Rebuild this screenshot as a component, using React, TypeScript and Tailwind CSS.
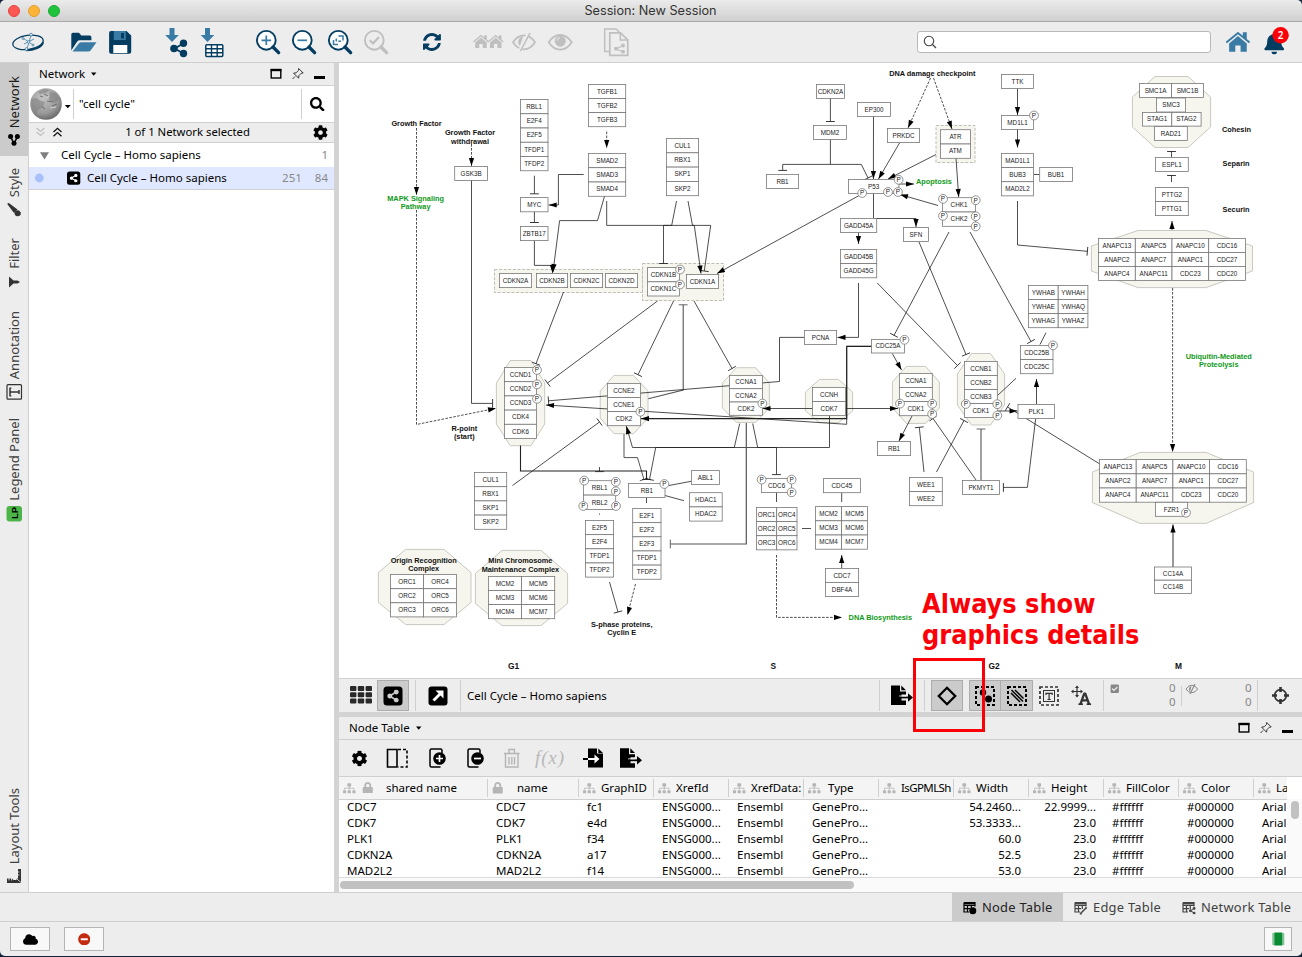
import React from "react";
import {
  FaShareAlt, FaHome, FaBell, FaCog, FaCloud, FaPaintBrush, FaSearch,
  FaSyncAlt, FaMinusCircle, FaSitemap, FaLock, FaCheckSquare, FaFont,
} from "react-icons/fa";

const NAVY = "#053d61";
const BLUE = "#3a7ba5";
const OFF = "#bfbfbf";

type ArtProps = { x: number; y: number; w: number; h: number; children?: React.ReactNode };
const Art = ({ x, y, w, h, children }: ArtProps) => (
  <svg className="block shrink-0" width={w} height={h} viewBox={`${x} ${y} ${w} ${h}`} fill="none">
    {children}
  </svg>
);

/* ---------- network diagram ---------- */

type Pt = [number, number];
type EdgeSpec = { p: Pt[]; end?: "a" | "t"; start?: "a"; dash?: boolean; c?: string; sw?: number };

const head = (from: Pt, to: Pt) => {
  const dx = to[0] - from[0], dy = to[1] - from[1];
  const l = Math.hypot(dx, dy) || 1;
  const ux = dx / l, uy = dy / l;
  const bx = to[0] - ux * 8, by = to[1] - uy * 8;
  return `${to[0]},${to[1]} ${bx - uy * 2.6},${by + ux * 2.6} ${bx + uy * 2.6},${by - ux * 2.6}`;
};
const bar = (from: Pt, to: Pt) => {
  const dx = to[0] - from[0], dy = to[1] - from[1];
  const l = Math.hypot(dx, dy) || 1;
  const ux = dx / l, uy = dy / l;
  return `M${to[0] - uy * 4.4} ${to[1] + ux * 4.4}L${to[0] + uy * 4.4} ${to[1] - ux * 4.4}`;
};

const Edge = ({ p, end, start, dash, c = "#222", sw = 0.8 }: EdgeSpec) => {
  const a = p[p.length - 2], b = p[p.length - 1];
  return (
    <g>
      <polyline points={p.map((q) => q.join(",")).join(" ")} fill="none" stroke={c} strokeWidth={sw} strokeDasharray={dash ? "2.6 1.4" : undefined} />
      {end === "a" && <polygon points={head(a, b)} fill="#000" />}
      {end === "t" && <path d={bar(a, b)} stroke={c} strokeWidth={0.9} />}
      {start === "a" && <polygon points={head(p[1], p[0])} fill="#000" />}
    </g>
  );
};

const G = "#555";
const edges: EdgeSpec[] = [
  { p: [[416.5, 128], [416.5, 195]], end: "a", dash: true },
  { p: [[416.5, 210], [416.5, 424.5], [496, 408.3]], end: "a", dash: true },
  { p: [[471.5, 144], [471.5, 166]], end: "a", dash: true },
  { p: [[471.5, 180], [471.5, 403.4], [492.6, 403.4]], end: "t" },
  { p: [[534.4, 175.7], [534.4, 193.8]], end: "t" },
  { p: [[534.4, 212], [534.4, 222.5]], end: "t" },
  { p: [[534.4, 240.7], [534.4, 265.4], [552.5, 265.4], [552.5, 273]], end: "a" },
  { p: [[583.7, 174.5], [558.4, 174.5], [558.4, 205], [548.7, 205]], end: "a" },
  { p: [[606.7, 131.5], [606.7, 148]], end: "a", dash: true },
  { p: [[604.6, 196], [597.5, 220.6], [559.6, 220.6], [553, 272]], end: "a" },
  { p: [[606.7, 201], [606.7, 225.4], [710.7, 225.4], [704.3, 271]], end: "t" },
  { p: [[676.5, 201], [671.7, 225.4], [663.5, 225.4], [663.5, 263.5]], end: "t" },
  { p: [[688, 201], [692.5, 225.4], [694.3, 225.4], [701, 273.5]], end: "a" },
  { p: [[860, 195], [717, 273.5]], end: "a" },
  { p: [[563.5, 292], [536, 363.7]], end: "t" },
  { p: [[657.5, 301], [547.5, 383]], end: "t" },
  { p: [[673.5, 301], [638, 374.7]], end: "t" },
  { p: [[694, 301], [732, 368.5]], end: "t" },
  { p: [[648.3, 398.7], [683.2, 390], [683.2, 304.8]], end: "t", c: G, sw: 1.1 },
  { p: [[804, 337.4], [779.5, 337.4], [779.5, 381.5], [548.5, 400.8]], end: "t" },
  { p: [[871.7, 346.4], [846.7, 346.4], [846.7, 424.3], [546, 405]], end: "a" },
  { p: [[871.7, 346.4], [846.7, 346.4], [846.7, 418.6], [641, 418.6]], end: "a", sw: 1.1 },
  { p: [[762.5, 408.5], [898, 408.5]], end: "a", start: "a" },
  { p: [[829.5, 415.5], [829.5, 447.5], [632.5, 447.5], [626.3, 426]], end: "a" },
  { p: [[624, 434], [624, 457.6], [637.5, 457.6], [644, 479.5]], end: "t", c: G, sw: 1 },
  { p: [[739.7, 423.5], [734.3, 447.5], [655.7, 447.5], [649.5, 479.5]], end: "t" },
  { p: [[746.3, 423], [746.3, 544], [670.3, 544]], end: "t", c: G, sw: 1.2 },
  { p: [[752.7, 423.5], [757.7, 447.5], [776.5, 447.5], [776.5, 474.6]], end: "t" },
  { p: [[520.5, 445.5], [520.5, 471], [646.5, 471], [646.5, 479.5]], end: "t", sw: 1.1 },
  { p: [[599.5, 467], [599.5, 471.6]], end: "t" },
  { p: [[512.5, 485.5], [599.5, 422]], end: "t" },
  { p: [[669, 485.5], [691, 481.3]] },
  { p: [[665, 495.5], [684, 500.7]] },
  { p: [[646.5, 497], [646.5, 503]] },
  { p: [[599.5, 513.5], [599.5, 514.7]] },
  { p: [[609.5, 582], [618, 612]], end: "t" },
  { p: [[635.5, 584], [627.5, 615]], end: "a", dash: true },
  { p: [[776.5, 492.7], [776.5, 502]] },
  { p: [[776.5, 555], [776.5, 617.4], [842, 617.4]], end: "a", dash: true },
  { p: [[802, 528.5], [811, 528.5]] },
  { p: [[841.7, 493], [841.7, 502]] },
  { p: [[841.7, 568], [841.7, 555]], end: "a" },
  { p: [[858.5, 232], [858.5, 244]], end: "a" },
  { p: [[858.5, 283], [858.5, 337.4], [837.5, 337.4]], end: "a" },
  { p: [[877.3, 283], [957.5, 365.5]], end: "t" },
  { p: [[919, 242], [966, 354.5]], end: "t" },
  { p: [[949, 232], [894, 335.3]], end: "t" },
  { p: [[970, 232], [1031, 341.5]], end: "t" },
  { p: [[892.3, 353.5], [901.5, 370]], end: "a" },
  { p: [[912, 416], [899, 441]], end: "a" },
  { p: [[924, 472], [919.3, 427.3]], end: "t" },
  { p: [[936.5, 472], [964, 420.5]], end: "t" },
  { p: [[976, 480], [933, 418.5]], end: "t" },
  { p: [[981, 480], [981, 429]], end: "t", c: G, sw: 1.1 },
  { p: [[1036.5, 404], [1036.5, 379]], end: "a" },
  { p: [[1035.7, 418.5], [1027.4, 487.4], [1003.4, 487.4]], end: "t" },
  { p: [[1040, 344.5], [1046, 332.7]] },
  { p: [[1016, 378.3], [997.5, 395.5]] },
  { p: [[998, 411], [1017.5, 411]], end: "a" },
  { p: [[1116, 474], [1007.5, 407]], end: "t" },
  { p: [[1173, 567], [1173, 524.5]], end: "a", c: G, sw: 1.2 },
  { p: [[1172.6, 288], [1172.6, 452]], end: "a", dash: true },
  { p: [[1172, 230], [1172, 221]], end: "a" },
  { p: [[930.5, 78], [908, 128]], end: "a", dash: true },
  { p: [[933.5, 78], [952, 129]], end: "a", dash: true },
  { p: [[830.4, 98], [830.4, 121.5]], end: "t" },
  { p: [[830.4, 139], [830.4, 164.4], [782.7, 164.4], [782.7, 170.4]], end: "t" },
  { p: [[830.4, 164.4], [861.3, 164.4], [868, 178]], end: "t" },
  { p: [[873.5, 116.5], [873.4, 179]], end: "a" },
  { p: [[899.5, 143], [878.5, 179]], end: "a" },
  { p: [[936, 154.5], [888, 179]], end: "a" },
  { p: [[956, 158], [958.7, 197]], end: "a" },
  { p: [[899, 184], [914, 184]], end: "a" },
  { p: [[938, 205.5], [900, 194.5]], end: "a" },
  { p: [[873.5, 194], [873.5, 218.5], [916, 218.5], [916, 227]], end: "a" },
  { p: [[1017.5, 88], [1017.5, 115]], end: "a" },
  { p: [[1017.5, 129], [1017.5, 147.5]], end: "a" },
  { p: [[1034, 174.5], [1039.7, 174.5]] },
  { p: [[1017.5, 201], [1017.5, 245], [1087.4, 251.3]], end: "t" },
  { p: [[1171.5, 157], [1171.5, 151.5]], end: "t" },
  { p: [[1171.5, 182], [1171.5, 175.5]], end: "t" },
];

/* left, top, right, bottom, flat-left, flat-right, side-top, side-bottom */
const octagons: number[][] = [
  [496.4, 360.5, 544.7, 445.7, 510.3, 531, 383, 424],
  [600.2, 375.4, 648, 433.7, 614, 633.5, 391, 418],
  [722.4, 367.7, 769.4, 422.4, 736.5, 755.5, 383, 408],
  [892.4, 366.4, 939.4, 423.4, 906.5, 925.5, 382, 408],
  [805.4, 379.4, 852.6, 422.6, 819.5, 838.5, 392, 411],
  [957.4, 353.5, 1004.6, 425, 971.5, 990.5, 374, 405],
  [378.4, 549.4, 471, 624.6, 405.7, 444, 572.5, 602.5],
  [475.4, 550.4, 567.6, 625.6, 502, 541, 573.5, 603.5],
  [1132.4, 76.5, 1210.6, 147.5, 1155, 1188, 97, 127],
  [1091.4, 230.5, 1252.5, 287.6, 1138, 1206, 246, 271],
  [1092.4, 452.4, 1253.6, 523.4, 1140, 1206, 472, 502.5],
];

/* x, y, cell width, cell height, columns, labels */
type Stack = [number, number, number, number, number, string];
const stacks: Stack[] = [
  [588.4, 84.4, 37.3, 14.1, 1, "TGFB1 TGFB2 TGFB3"],
  [520.4, 99.5, 27.6, 14.25, 1, "RBL1 E2F4 E2F5 TFDP1 TFDP2"],
  [588.4, 153.4, 37.3, 14.3, 1, "SMAD2 SMAD3 SMAD4"],
  [520.4, 197.6, 27.6, 14.2, 1, "MYC"],
  [520.4, 226.5, 27.6, 14.1, 1, "ZBTB17"],
  [666.4, 138.5, 32.2, 14.3, 1, "CUL1 RBX1 SKP1 SKP2"],
  [454.7, 166.4, 32.8, 14, 1, "GSK3B"],
  [499.4, 273.5, 32.2, 14.1, 1, "CDKN2A"],
  [536.4, 273.5, 31.2, 14.1, 1, "CDKN2B"],
  [570.4, 273.5, 32.2, 14.1, 1, "CDKN2C"],
  [605.4, 273.5, 32.2, 14.1, 1, "CDKN2D"],
  [647.4, 267.6, 32, 14.2, 1, "CDKN1B CDKN1C"],
  [686.4, 274.5, 32.2, 14, 1, "CDKN1A"],
  [504.4, 367.5, 32.2, 14.2, 1, "CCND1 CCND2 CCND3 CDK4 CDK6"],
  [607.5, 383.4, 32.9, 14.1, 1, "CCNE2 CCNE1 CDK2"],
  [729.5, 375.4, 33, 13.3, 1, "CCNA1 CCNA2 CDK2"],
  [474.5, 472.5, 32.2, 14.2, 1, "CUL1 RBX1 SKP1 SKP2"],
  [583.4, 480.7, 32.3, 14.4, 1, "RBL1 RBL2"],
  [628.6, 483.5, 36.4, 14, 1, "RB1"],
  [691.4, 470.6, 28, 13.8, 1, "ABL1"],
  [689.4, 492.7, 32.8, 14.2, 1, "HDAC1 HDAC2"],
  [632.7, 508.5, 28.3, 14.15, 1, "E2F1 E2F2 E2F3 TFDP1 TFDP2"],
  [585.4, 520.5, 28.2, 14.15, 1, "E2F5 E2F4 TFDP1 TFDP2"],
  [390.5, 574.6, 33, 14.1, 2, "ORC1 ORC4 ORC2 ORC5 ORC3 ORC6"],
  [488.5, 576.4, 33.1, 14.1, 2, "MCM2 MCM5 MCM3 MCM6 MCM4 MCM7"],
  [761.6, 478.4, 30, 14, 1, "CDC6"],
  [756.4, 507.4, 20.3, 14.15, 2, "ORC1 ORC4 ORC2 ORC5 ORC3 ORC6"],
  [823.4, 478.6, 37, 14.1, 1, "CDC45"],
  [815.6, 506.6, 26, 14.2, 2, "MCM2 MCM5 MCM3 MCM6 MCM4 MCM7"],
  [825.4, 568.4, 33.2, 14, 1, "CDC7 DBF4A"],
  [840.5, 218.4, 36.2, 14.1, 1, "GADD45A"],
  [840.5, 249.4, 36.2, 14.2, 1, "GADD45B GADD45G"],
  [804.4, 330.4, 32.2, 14.1, 1, "PCNA"],
  [903.4, 227.4, 25, 14.1, 1, "SFN"],
  [871.6, 339.4, 32.8, 13.6, 1, "CDC25A"],
  [899.4, 373.4, 32.9, 14.1, 1, "CCNA1 CCNA2 CDK1"],
  [812.5, 387.4, 33, 14.1, 1, "CCNH CDK7"],
  [877.5, 441.5, 33, 14.1, 1, "RB1"],
  [909.5, 477.5, 32.8, 14.1, 1, "WEE1 WEE2"],
  [962.5, 480.4, 37, 14, 1, "PKMYT1"],
  [1018, 404.4, 36.6, 14, 1, "PLK1"],
  [1020.4, 345.5, 32.6, 14.1, 1, "CDC25B CDC25C"],
  [1028.5, 285.4, 29.7, 14.1, 2, "YWHAB YWHAH YWHAE YWHAQ YWHAG YWHAZ"],
  [964.4, 361.4, 32.9, 14.05, 1, "CCNB1 CCNB2 CCNB3 CDK1"],
  [1099.5, 459.6, 36.7, 14.2, 4, "ANAPC13 ANAPC5 ANAPC10 CDC16 ANAPC2 ANAPC7 ANAPC1 CDC27 ANAPC4 ANAPC11 CDC23 CDC20"],
  [1155.5, 502.3, 32, 14, 1, "FZR1"],
  [1154.4, 567, 37.2, 13.2, 1, "CC14A CC14B"],
  [1098.6, 238.4, 36.7, 14, 4, "ANAPC13 ANAPC5 ANAPC10 CDC16 ANAPC2 ANAPC7 ANAPC1 CDC27 ANAPC4 ANAPC11 CDC23 CDC20"],
  [816.4, 84.4, 28, 14, 1, "CDKN2A"],
  [813.6, 125.4, 33, 14, 1, "MDM2"],
  [766.4, 174.4, 32.2, 14, 1, "RB1"],
  [857.6, 102.5, 32.8, 14, 1, "EP300"],
  [887.4, 128.5, 32.2, 14, 1, "PRKDC"],
  [940.5, 129.7, 29.9, 14.3, 1, "ATR ATM"],
  [848.5, 179.5, 50.4, 14, 1, "P53"],
  [942.6, 197.7, 32.8, 14.3, 1, "CHK1 CHK2"],
  [1001.4, 74.5, 32.2, 14, 1, "TTK"],
  [1001.4, 115.4, 32.2, 14, 1, "MD1L1"],
  [1001.4, 153.4, 32.2, 14.15, 1, "MAD1L1 BUB3 MAD2L2"],
  [1039.7, 167.4, 32.8, 14.1, 1, "BUB1"],
  [1139.5, 83.5, 32, 13.9, 2, "SMC1A SMC1B"],
  [1156.5, 98, 29, 14, 1, "SMC3"],
  [1142.5, 112.4, 29.3, 13.7, 2, "STAG1 STAG2"],
  [1154.5, 126.4, 32.8, 14, 1, "RAD21"],
  [1155.5, 157.4, 32.8, 14, 1, "ESPL1"],
  [1155.5, 187.4, 32.8, 14.1, 1, "PTTG2 PTTG1"],
];

const phospho: Pt[] = [
  [680, 269.5], [680, 284.5], [537, 370], [537, 384.4], [537, 398.8], [640.4, 411.7], [762.4, 403.5],
  [584.2, 480.6], [615.8, 481.8], [615.8, 491.3], [583.3, 506], [616, 506], [664.4, 484],
  [761.6, 479.6], [791.6, 479.6], [791.6, 492.3], [904.5, 339.8], [900, 403.6], [932.2, 403.8], [932.2, 414],
  [1053, 345.4], [965.8, 404], [997.3, 404.2], [997.3, 415.5], [1186, 512.7],
  [898.6, 179.8], [888, 192], [898, 192], [862.2, 193], [943, 198.8], [975.7, 200.2], [943, 215.8], [975.7, 216.3], [975.7, 226.4],
  [1034, 115.5],
];

/* text, x, baseline, anchor, colour, size */
type Lab = [string, number, number, ("middle" | "start")?, string?, number?];
const GREEN = "#0f9a20";
const labels: Lab[] = [
  ["Growth Factor", 416.5, 126], ["Growth Factor", 470, 135], ["withdrawal", 470, 143.6],
  ["MAPK Signaling", 415.6, 200.6, "middle", GREEN], ["Pathway", 415.6, 209, "middle", GREEN],
  ["R-point", 464.3, 431], ["(start)", 464.3, 439.4],
  ["Origin Recognition", 423.7, 562.8], ["Complex", 423.7, 571.2],
  ["Mini Chromosome", 520.4, 563.4], ["Maintenance Complex", 520.4, 572],
  ["S-phase proteins,", 621.7, 626.6], ["Cyclin E", 621.7, 635],
  ["DNA Biosynthesis", 880.3, 620, "middle", GREEN], ["Apoptosis", 934, 184.4, "middle", GREEN],
  ["DNA damage checkpoint", 932.3, 76.2],
  ["Cohesin", 1222, 132, "start"], ["Separin", 1222.6, 166.2, "start"], ["Securin", 1222.6, 212, "start"],
  ["Ubiquitin-Mediated", 1218.7, 358.6, "middle", GREEN], ["Proteolysis", 1218.7, 367, "middle", GREEN],
  ["G1", 513.5, 668.8, "middle", "#111", 8.4], ["S", 773.3, 668.8, "middle", "#111", 8.4],
  ["G2", 994, 668.8, "middle", "#111", 8.4], ["M", 1178.6, 668.8, "middle", "#111", 8.4],
];

const NetworkView = () => (
  <svg className="block h-[615px] w-[963px] shrink-0 bg-white font-['Liberation_Sans',sans-serif]" viewBox="339 63 963 615">
    {octagons.map(([l, t, r, b, fl, fr, st, sb], i) => (
      <polygon key={i} points={`${fl},${t} ${fr},${t} ${r},${st} ${r},${sb} ${fr},${b} ${fl},${b} ${l},${sb} ${l},${st}`} fill="#f6f6ee" stroke="#c3c3bb" strokeWidth={0.9} />
    ))}
    <rect x={494.5} y={269.5} width={148} height={23} fill="#f6f6ee" stroke="#b5b5ad" strokeWidth={0.9} strokeDasharray="3 1.6" />
    <rect x={642.5} y={263.5} width={81} height={37} fill="#f6f6ee" stroke="#b5b5ad" strokeWidth={0.9} strokeDasharray="3 1.6" />
    <rect x={936} y={125.5} width={39} height={37} fill="#f6f6ee" stroke="#b5b5ad" strokeWidth={0.9} strokeDasharray="3 1.6" />
    {edges.map((e, i) => <Edge key={i} {...e} />)}
    {stacks.map(([x, y, w, h, cols, names], k) =>
      names.split(" ").map((n, i) => {
        const cx = x + (i % cols) * w, cy = y + Math.floor(i / cols) * h;
        return (
          <g key={`${k}-${i}`}>
            <rect x={cx} y={cy} width={w} height={h} fill="#fff" stroke="#777" strokeWidth={0.8} />
            <text x={cx + w / 2} y={cy + h / 2 + 2.2} fontSize={6.3} textAnchor="middle" fill="#222">{n}</text>
          </g>
        );
      })
    )}
    {phospho.map(([x, y], i) => (
      <g key={i}>
        <circle cx={x} cy={y} r={4.4} fill="#fff" stroke="#777" strokeWidth={0.8} />
        <text x={x} y={y + 2.3} fontSize={6.4} textAnchor="middle" fill="#222">P</text>
      </g>
    ))}
    {labels.map(([t, x, y, a = "middle", c = "#111", s = 7.35], i) => (
      <text key={i} x={x} y={y} fontSize={s} fontWeight={700} textAnchor={a} fill={c}>{t}</text>
    ))}
  </svg>
);

/* ---------- window chrome ---------- */

const TitleBar = () => (
  <div className="flex h-[22px] shrink-0 items-center border-b border-[#a9a9a9] bg-linear-to-b from-[#ebebeb] to-[#d0d0d0] pl-[8px]">
    <div className="flex w-[200px] gap-[8px]">
      <span className="size-[12px] rounded-full border border-[#e0443e] bg-[#fc5753]" />
      <span className="size-[12px] rounded-full border border-[#dea035] bg-[#fdb335]" />
      <span className="size-[12px] rounded-full border border-[#1fa833] bg-[#1fc33c]" />
    </div>
    <div className="flex-1 pr-[209px] text-center font-['Inter'] text-[12.700px] leading-[22px] text-[#333]">
      <span>Session: New Session</span>
    </div>
  </div>
);

const Lens = ({ x, c = NAVY, children }: { x: number; c?: string; children: React.ReactNode }) => (
  <g transform={`translate(${x} 0)`}>
    <circle cx={10.3} cy={40.3} r={9.4} stroke={c} strokeWidth={1.9} fill="#fff" fillOpacity={c === NAVY ? 1 : 0} />
    <path d="M17 47l5.6 5.6" stroke={c} strokeWidth={3.4} strokeLinecap="round" />
    {children}
  </g>
);

const House = ({ x, y, s, c }: { x: number; y: number; s: number; c: string }) => (
  <g transform={`translate(${x} ${y}) scale(${s})`} fill={c}>
    <path d="M0 10.300L12.500 0l5 4.200V.6h4v6.900L25 10.300l-1.300 1.600L12.500 2.700 1.300 11.900z" />
    <path d="M3.500 12l9-7.500 9 7.500v8.500h-6.300v-6.300H9.800v6.300H3.500z" />
  </g>
);

const MainToolbar = () => (
  <div className="flex h-[41px] shrink-0 items-center border-b border-[#cfcfcf] bg-[#ededed]">
    <Art x={0} y={22} w={60} h={40}>
      <ellipse cx={28} cy={42.4} rx={15.3} ry={7} transform="rotate(-8 28 42.4)" stroke={NAVY} strokeWidth={1.300} />
      <path d="M26 50.200c8 0 16-3 17-8" stroke={NAVY} strokeWidth={2} />
      <g stroke={BLUE} strokeWidth={0.800} fill="#ededed">
        <path d="M31 35l-4 14M23 38l10 7M34 39l-10 5" />
        <circle cx={31} cy={34.700} r={1.400} /><circle cx={26.500} cy={49} r={1.400} />
        <circle cx={23} cy={38.500} r={1} /><circle cx={33} cy={45} r={1} /><circle cx={28.500} cy={42} r={1.300} />
      </g>
    </Art>
    <Art x={60} y={22} w={90} h={40}>
      <path d="M71.300 50.500V34.500q0-1.700 1.700-1.700h6l2.300 2.700h8.500q1.600 0 1.600 1.700v3h-11.600q-1.700 0-2.600 1.400z" fill={NAVY} />
      <path d="M72.500 51.500l6.300-8q.9-1.200 2.400-1.200h15.300l-5.700 8q-.9 1.200-2.400 1.200z" fill={BLUE} />
      <path d="M111 31h15.500l4.700 4.600v16.200q0 1.900-1.900 1.900h-18.300q-1.900 0-1.900-1.900v-18.900q0-1.900 1.900-1.900z" fill={NAVY} />
      <path d="M113.800 31h12v8.200q0 .8-.8.800h-10.400q-.8 0-.8-.8z" fill={BLUE} />
      <path d="M121 33h3v5.500h-3z" fill={NAVY} /><path d="M113.300 45h14v8h-14z" fill="#fff" />
    </Art>
    <Art x={150} y={22} w={96} h={40}>
      <path d="M169.500 28h5v7h4.300l-6.800 7-6.800-7h4.300z" fill={BLUE} />
      <path d="M174.500 48.500l9-5M174.500 48.500l9 5" stroke={NAVY} strokeWidth={2} />
      <circle cx={174} cy={48.500} r={3.800} fill={NAVY} /><circle cx={183.500} cy={43.300} r={3.700} fill={NAVY} /><circle cx={183.500} cy={53.500} r={3.700} fill={NAVY} />
      <path d="M205 28h5v7h4.300l-6.800 7-6.800-7h4.300z" fill={BLUE} />
      <rect x={205.800} y={44.800} width={17} height={11.800} rx={1} fill="#fff" stroke={NAVY} strokeWidth={1.500} />
      <path d="M206 48.800h17M206 52.700h17M211.500 45v12M217.200 45v12" stroke={NAVY} strokeWidth={1.400} />
    </Art>
    <Art x={246} y={22} w={154} h={40}>
      <Lens x={256}><path d="M5.500 40.300h9.600M10.300 35.500v9.600" stroke={BLUE} strokeWidth={1.700} /></Lens>
      <Lens x={292}><path d="M5.500 40.300h9.600" stroke={BLUE} strokeWidth={1.700} /></Lens>
      <Lens x={328}>
        <path d="M10.500 36h4.500v4.500M10 44.600H5.500V40M8.300 41.500v-3M12.300 42v-.8h-2" stroke={BLUE} strokeWidth={1.500} />
      </Lens>
      <Lens x={364} c={OFF}><path d="M5.800 40.300l3.200 3.200 6-6.500" stroke={OFF} strokeWidth={2.200} /></Lens>
    </Art>
    <Art x={400} y={22} w={60} h={40}>
      <FaSyncAlt x={422.700} y={32.700} size={18.500} color={NAVY} />
    </Art>
    <Art x={460} y={22} w={120} h={40}>
      <House x={473} y={34.800} s={0.640} c={OFF} />
      <House x={487.700} y={34.800} s={0.640} c={OFF} />
      <path d="M513 42.300q4.500-7 11-7t11 7q-4.500 7-11 7t-11-7z" stroke={OFF} strokeWidth={1.800} />
      <path d="M520 46a5.500 5.500 0 0 1 3-9.500z" fill={OFF} />
      <path d="M529 32.500l-9 18" stroke="#ededed" strokeWidth={3.500} /><path d="M530 33l-9.500 18" stroke={OFF} strokeWidth={1.600} />
      <path d="M548.700 42.300q4.600-7.300 11.500-7.300t11.500 7.300q-4.600 7.300-11.500 7.300t-11.500-7.300z" stroke={OFF} strokeWidth={1.800} />
      <circle cx={560.300} cy={41.200} r={5.500} fill={OFF} />
      <path d="M557 40.500q.5-2.500 3-2.800" stroke="#ededed" strokeWidth={1} />
    </Art>
    <Art x={580} y={22} w={70} h={40}>
      <path d="M609 51.500h-4.300V29h11.500l3 3" stroke={OFF} strokeWidth={1.500} />
      <path d="M609.800 32.800h10.700l7.300 7v15.500h-18z" stroke={OFF} strokeWidth={1.700} /><path d="M620.300 33v7h7.300" stroke={OFF} strokeWidth={1.500} />
      <path d="M623 45.500l-7 3.500 7 3" stroke={OFF} strokeWidth={1.200} />
      <circle cx={623} cy={45.500} r={1.900} fill={OFF} /><circle cx={616} cy={48.700} r={1.900} fill={OFF} /><circle cx={623} cy={51.700} r={1.900} fill={OFF} />
    </Art>
    <div className="ml-[267px] flex h-[22px] w-[294px] shrink-0 items-center rounded-[3px] border border-[#b9b9b9] bg-white pl-[5px]">
      <Art x={0} y={0} w={14} h={14}>
        <circle cx={6} cy={6} r={4.700} stroke="#444" strokeWidth={1.100} /><path d="M9.500 9.500l3.500 3.500" stroke="#444" strokeWidth={1.300} />
      </Art>
    </div>
    <Art x={1211} y={22} w={91} h={40}>
      <House x={1225.700} y={31.700} s={0.980} c={BLUE} />
      <FaBell x={1263} y={32} size={22.500} color={NAVY} />
      <circle cx={1280.600} cy={35.300} r={8.200} fill="#fb0007" />
      <text x={1280.600} y={39} fontSize={10} fontWeight={600} textAnchor="middle" fill="#fff" fontFamily="Noto Sans">2</text>
    </Art>
  </div>
);

const VTab = ({ label, children, className = "" }: { label: string; children: React.ReactNode; className?: string }) => (
  <div className={`flex w-[28px] flex-col items-center justify-end ${className}`}>
    <span className="mb-[2px] rotate-180 text-[13px] leading-[16px] [writing-mode:vertical-rl]">{label}</span>
    {children}
  </div>
);

const SideTabs = () => (
  <div className="flex w-[29px] shrink-0 flex-col border-r border-[#cfcfcf] bg-[#ededed] text-[#404040]">
    <VTab label="Network" className="h-[93px] bg-[#cbcbcb] text-[#1a1a1a]">
      <Art x={0} y={130} w={28} h={26}>
        <path d="M10.500 136.500l3.500 7 3.500-7" stroke="#000" strokeWidth={1.500} />
        <circle cx={10.600} cy={136.600} r={2.500} fill="#000" /><circle cx={17.400} cy={136.600} r={2.500} fill="#000" /><circle cx={14} cy={143.200} r={2.500} fill="#000" />
      </Art>
    </VTab>
    <VTab label="Style" className="h-[69px]">
      <Art x={0} y={199} w={28} h={26}>
        <path d="M7.500 203.500q1-.8 2 0l8 6-3.500 3.500-6-8q-.9-1-.5-1.500z" fill="#333" />
        <path d="M14.500 212.500q1.500-3 4.500-2 2.500 1.500 1.800 4-1 2-3.300 1.800-3 0-3-3.800z" fill="#333" />
      </Art>
    </VTab>
    <VTab label="Filter" className="h-[73px]">
      <Art x={0} y={271} w={28} h={27}>
        <path d="M9 276.500v11l4.500-4h4l2.500-1.500-2.500-1.500h-4z" fill="#333" />
      </Art>
    </VTab>
    <VTab label="Annotation" className="h-[110px]">
      <Art x={0} y={381} w={28} h={27}>
        <rect x={7} y={384.700} width={14.500} height={14.500} rx={1} stroke="#333" strokeWidth={1.200} />
        <path d="M10 388v8M10 392h9M19 390v4" stroke="#333" strokeWidth={1.500} /><path d="M9.500 388h2M9.500 396h2" stroke="#333" strokeWidth={1} />
      </Art>
    </VTab>
    <VTab label="Legend Panel" className="h-[122px]">
      <Art x={0} y={503} w={28} h={27}>
        <rect x={6.500} y={506} width={15.500} height={15.500} rx={3} fill="#4bb549" />
        <text transform="translate(18 519) rotate(-90)" fontSize={9.500} fontWeight={700} fill="#000" fontFamily="Liberation Sans">LP</text>
      </Art>
    </VTab>
    <VTab label="Layout Tools" className="mt-auto h-[140px]">
      <Art x={0} y={866} w={28} h={26}>
        <path d="M7 878.500h5l1.500 1.500h2.500l2-2v-9h3v14H7z" fill="#333" />
        <path d="M9 878v2.500M11.500 878v2.500M17.500 872h2M17.500 875h2M17 879l4 3.500" stroke="#ededed" strokeWidth={0.800} />
      </Art>
    </VTab>
  </div>
);

const PanelHeader = ({ title }: { title: string }) => (
  <div className="flex h-[23px] shrink-0 items-center border-b border-[#cfcfcf] bg-[#ededed] pl-[10px]">
    <span>{title}</span>
    <Art x={0} y={0} w={20} h={10}><path d="M6 3.500h5.400l-2.700 3.200z" fill="#000" /></Art>
    <div className="ml-auto">
      <Art x={270} y={63} w={65} h={22}>
        <rect x={272.200} y={70} width={9.600} height={8} stroke="#000" strokeWidth={1.400} /><path d="M271.500 70h11" stroke="#000" strokeWidth={2.400} />
        <path d="M299.700 68.500l4.500 4.500-1.800.2-2.500 2.500-.3 2.500-5-5 2.500-.4 2.400-2.400zM296 76.500l-2.500 2.500" stroke="#222" strokeWidth={0.900} />
        <rect x={315} y={76} width={11} height={3} fill="#000" />
      </Art>
    </div>
  </div>
);

const NetworkPanel = () => (
  <div className="flex w-[305px] shrink-0 flex-col bg-white">
    <PanelHeader title="Network" />
    <div className="flex h-[37px] items-center border-b border-[#cfcfcf]">
      <Art x={29} y={86} w={44} h={36}>
        <defs>
          <radialGradient id="globe" cx="0.4" cy="0.3" r="0.7">
            <stop offset="0" stopColor="#c4c4c4" /><stop offset="0.7" stopColor="#9a9a9a" /><stop offset="1" stopColor="#6c6c6c" />
          </radialGradient>
        </defs>
        <circle cx={46} cy={104} r={15.800} fill="url(#globe)" />
        <path d="M31 99l5-1 5 3 4 1-2 5-5 3-2 6q-5-5-5-12zM38 92l6-3 5 1-3 3-6 1zM50 92l6 1 4 6-5 4-6-3z" fill="#7e7e7e" opacity={0.550} />
        <path d="M44 94l4 2M47 101l6 1M42 107l3 2M52 106l5-2M40 96l3 1" stroke="#555" strokeWidth={0.700} />
        <path d="M50 108l6-1M46 98l3-2" stroke="#ddd" strokeWidth={0.800} />
        <path d="M64.800 105h6l-3 3.200z" fill="#000" />
      </Art>
      <div className="flex h-[30px] w-[229px] items-center border-x border-[#cfcfcf] pl-[5px]">"cell cycle"</div>
      <FaSearch className="ml-[8px]" size={14.500} color="#000" />
    </div>
    <div className="flex h-[20px] items-center border-b border-[#cfcfcf] bg-[#ededed]">
      <Art x={29} y={123} w={44} h={19}>
        <path d="M36.500 128l4 3.500 4-3.500M36.500 132l4 3.500 4-3.500" stroke={OFF} strokeWidth={1.200} />
        <path d="M53.500 132l4-3.700 4 3.700M53.500 136.300l4-3.700 4 3.700" stroke="#111" strokeWidth={1.300} />
      </Art>
      <span className="w-[229px] text-center text-[11.300px]">1 of 1 Network selected</span>
      <FaCog className="ml-[11px]" size={15} color="#000" />
    </div>
    <div className="flex h-[24px] items-center pr-[6px]">
      <Art x={29} y={143} w={32} h={24}><path d="M40 152.300h9l-4.500 7.200z" fill="#808080" /></Art>
      <span>Cell Cycle – Homo sapiens</span>
      <span className="ml-auto text-[#888]">1</span>
    </div>
    <div className="flex h-[23px] items-center border-b border-[#cfcfcf] bg-[#e0e8ff] pr-[6px]">
      <Art x={29} y={167} w={58} h={22}>
        <circle cx={39.300} cy={178} r={4.400} fill="#a9c1fb" />
        <rect x={67} y={171.500} width={13.300} height={13.300} rx={2.500} fill="#000" />
        <FaShareAlt x={69.300} y={173.800} size={8.700} color="#fff" />
      </Art>
      <span>Cell Cycle – Homo sapiens</span>
      <span className="ml-auto text-[#888]">251</span>
      <span className="ml-[13px] text-[#888]">84</span>
    </div>
  </div>
);

const Vr = () => <div className="h-[31px] w-px shrink-0 bg-[#cfcfcf]" />;

const DocOut = ({ x, y }: { x: number; y: number }) => (
  <g transform={`translate(${x} ${y})`}>
    <path d="M0 0h9v6h6v3h-4.500v6H15v4.500H0zM10.300 0l4.700 4.700h-4.700z" fill="#000" />
    <path d="M9 12h9" stroke="#000" strokeWidth={1.800} /><path d="M17 7.700l5 4.300-5 4.300z" fill="#000" />
    <path d="M8 10.500h7" stroke="#ededed" strokeWidth={0.800} />
  </g>
);

const ViewToolbar = () => (
  <div className="flex h-[34px] shrink-0 items-center border-t border-[#cfcfcf] bg-[#ededed]">
    <Art x={339} y={679} w={38} h={33}>
      {[0, 1, 2].map((r) => [0, 1, 2].map((c) => (
        <rect key={`${r}${c}`} x={350 + c * 7.800} y={686 + r * 6.200} width={6.400} height={5} rx={1} fill="#2a2a2a" />
      )))}
    </Art>
    <div className="flex h-[31px] w-[32px] items-center justify-center border border-[#acacac] bg-[#cbcbcb]">
      <Art x={0} y={0} w={20} h={20}>
        <rect x={0.500} y={0.500} width={19} height={19} rx={3.500} fill="#000" />
        <FaShareAlt x={3.500} y={3.500} size={13} color="#cbcbcb" />
      </Art>
    </div>
    <div className="w-[6px]" /><Vr />
    <div className="flex w-[44px] justify-center">
      <Art x={0} y={0} w={20} h={20}>
        <rect x={0.500} y={0.500} width={19} height={19} rx={3} fill="#000" />
        <path d="M5.500 14.500l7.500-7.500" stroke="#fff" strokeWidth={2.800} /><path d="M7.500 4.500h8v8z" fill="#fff" />
      </Art>
    </div>
    <Vr />
    <span className="w-[418px] pl-[6px]">Cell Cycle – Homo sapiens</span>
    <Vr />
    <Art x={880} y={679} w={44} h={33}><DocOut x={891} y={685.500} /></Art>
    <Vr />
    <div className="ml-[6px] flex h-[31px] w-[32px] items-center justify-center border border-[#acacac] bg-[#cbcbcb]">
      <Art x={0} y={0} w={20} h={20}><path d="M10 1.800l8.200 8.200-8.200 8.200-8.200-8.200z" stroke="#000" strokeWidth={2.300} /></Art>
    </div>
    <div className="ml-[6px] flex h-[31px] w-[32px] items-center justify-center border border-[#acacac] bg-[#cbcbcb]">
      <Art x={0} y={0} w={20} h={20}>
        <rect x={1} y={1} width={18} height={18} stroke="#000" strokeWidth={2} strokeDasharray="3 2" />
        <circle cx={8} cy={6.500} r={3.200} fill="#000" /><circle cx={13.500} cy={13} r={3.500} fill="#000" />
      </Art>
    </div>
    <div className="flex h-[31px] w-[32px] items-center justify-center border border-l-0 border-[#acacac] bg-[#cbcbcb]">
      <Art x={0} y={0} w={20} h={20}>
        <rect x={1} y={1} width={18} height={18} stroke="#000" strokeWidth={2} strokeDasharray="3 2" />
        <path d="M4 7l9 9M4.500 4l11.500 11.500M8 4l8.500 8.500" stroke="#000" strokeWidth={1.500} />
      </Art>
    </div>
    <Art x={1033} y={679} w={70} h={33}>
      <rect x={1040} y={687} width={18} height={18} stroke="#333" strokeWidth={1.700} strokeDasharray="3 2" />
      <rect x={1043.500} y={690.500} width={11} height={11} stroke="#333" strokeWidth={1} />
      <path d="M1046 695v-1.700h6.200v1.700M1049.100 693.500v6M1047.500 699.500h3.200" stroke="#333" strokeWidth={1.200} />
      <path d="M1077 686.500v10M1072 691.500h10" stroke="#333" strokeWidth={1.200} />
      <path d="M1077 685.500l2 2.500h-4zM1077 697.500l2-2.500h-4zM1071 691.500l2.500-2v4zM1083 691.500l-2.500-2v4z" fill="#333" />
      <FaFont x={1077.500} y={691.500} size={14.500} color="#333" />
    </Art>
    <Vr />
    <div className="flex h-[30px] w-[77px] justify-between pl-[6px] text-[#888]">
      <FaCheckSquare size={9.500} className="mt-[3px]" />
      <span className="w-[12px] leading-[14px]">0<br />0</span>
    </div>
    <div className="h-[20px] w-px bg-[#cfcfcf]" />
    <div className="flex h-[30px] w-[75px] justify-between pl-[3px] text-[#888]">
      <Art x={511} y={32} w={14} h={14}>
        <path d="M512 40q2.300-3.800 5.800-3.800t5.800 3.800q-2.300 3.700-5.800 3.700t-5.800-3.700z" stroke="#888" strokeWidth={1} />
        <path d="M516 42.500a3.200 3.200 0 0 1 1.500-5.500z" fill="#888" /><path d="M521 35l-5 10" stroke="#888" strokeWidth={1.100} />
      </Art>
      <span className="w-[12px] leading-[14px]">0<br />0</span>
    </div>
    <Vr />
    <Art x={1258} y={679} w={44} h={33}>
      <circle cx={1280.500} cy={695.500} r={5.800} stroke="#333" strokeWidth={1.700} />
      <path d="M1280.500 687v5M1280.500 699v5M1272 695.500h5M1284 695.500h5" stroke="#333" strokeWidth={2.600} />
    </Art>
  </div>
);

const TableToolbar = () => (
  <div className="flex h-[37px] shrink-0 items-center border-b border-[#cfcfcf] bg-[#ededed]">
    <Art x={339} y={740} w={320} h={36}>
      <FaCog x={351.500} y={750.500} size={16} color="#000" />
      <path d="M387.500 749.500h9.500v17.500h-9.500zM397 749.500v17.500" stroke="#000" strokeWidth={1.600} />
      <path d="M398 749.500h9v17.500h-9" stroke="#000" strokeWidth={1.600} strokeDasharray="3 2" />
      {[0, 38].map((d) => (
        <g key={d} transform={`translate(${d} 0)`}>
          <path d="M442 753v-2.500q0-1.500-1.500-1.500h-9q-1.500 0-1.500 1.500v15q0 1.500 1.500 1.500h9" stroke="#000" strokeWidth={1.500} />
          <circle cx={439.500} cy={758.500} r={6.300} fill="#000" />
          <path d={d ? "M436 758.500h7" : "M436 758.500h7M439.500 755v7"} stroke="#fff" strokeWidth={1.700} />
        </g>
      ))}
      <path d="M504 753.500h15.500M509 753v-3.500h5.500v3.500M505.500 754v13h12.500v-13M509 757v7.500M511.800 757v7.500M514.500 757v7.500" stroke="#b5b5b5" strokeWidth={1.400} />
      <text x={535} y={763.500} fontSize={19} fontStyle="italic" fill="#b8b8b8" fontFamily="Liberation Serif" textLength={29}>f(x)</text>
      <path d="M588 748.500h9v5h6v14h-15zM598.300 748.500l4.700 4.500h-4.700z" fill="#000" />
      <path d="M583 759h5" stroke="#000" strokeWidth={2} /><path d="M588 759h8" stroke="#fff" strokeWidth={2} /><path d="M594.500 754.500l5 4.500-5 4.500z" fill="#fff" />
      <DocOut x={620} y={748.300} />
    </Art>
  </div>
);

type Col = { w: string; name: string; lock?: boolean; tree?: boolean; cells: string[]; num?: boolean; at?: string; last?: boolean };
const five = (s: string) => [s, s, s, s, s];
const ids = ["CDC7", "CDK7", "PLK1", "CDKN2A", "MAD2L2"];
const columns: Col[] = [
  { w: "w-[149px]", name: "shared name", at: "w-[43px]", tree: true, lock: true, cells: ids },
  { w: "w-[91px]", name: "name", at: "w-[25px]", lock: true, cells: ids },
  { w: "w-[75px]", name: "GraphID", tree: true, cells: ["fc1", "e4d", "f34", "a17", "f14"] },
  { w: "w-[75px]", name: "XrefId", tree: true, cells: five("ENSG000...") },
  { w: "w-[75px]", name: "XrefData:", tree: true, cells: five("Ensembl") },
  { w: "w-[75px]", name: "Type", at: "w-[20px]", tree: true, cells: five("GenePro...") },
  { w: "w-[75px]", name: "IsGPMLSh", tree: true, cells: five("\u00a0") },
  { w: "w-[75px]", name: "Width", tree: true, num: true, cells: ["54.2460...", "53.3333...", "60.0", "52.5", "53.0"] },
  { w: "w-[75px]", name: "Height", tree: true, num: true, cells: ["22.9999...", "23.0", "23.0", "23.0", "23.0"] },
  { w: "w-[75px]", name: "FillColor", tree: true, cells: five("#ffffff") },
  { w: "w-[75px]", name: "Color", tree: true, cells: five("#000000") },
  { w: "w-[33px]", name: "La", tree: true, cells: five("Arial"), last: true },
];

const DataTable = () => (
  <div className="flex h-[115px] shrink-0 flex-col bg-white">
    <div className="flex h-[100px]">
      {columns.map((c, i) => (
        <div key={i} className={`${c.w} shrink-0`}>
          <div className="mb-[-1px] flex h-[23px] items-center border-b border-[#cfcfcf] bg-[#f4f4f4] pl-[4px]">
            <div className={`flex shrink-0 gap-[6px] ${c.at ?? "w-[18px]"}`}>
              {c.tree && <FaSitemap className="shrink-0" size={12.500} color="#b5b5b5" />}
              {c.lock && <FaLock className="shrink-0" size={11.500} color="#b5b5b5" />}
            </div>
            <span className={`flex-1 whitespace-nowrap ${c.name.length === 8 ? "tracking-[-0.600px]" : ""}`}>{c.name}</span>
            {!c.last && <span className="h-[18px] w-px shrink-0 bg-[#cfcfcf]" />}
          </div>
          {c.cells.map((t, j) => (
            <div key={j} className={c.num ? "h-[16px] pr-[8px] text-right leading-[16px]" : "h-[16px] pl-[8px] leading-[16px] whitespace-nowrap"}>{t}</div>
          ))}
        </div>
      ))}
      <div className="flex flex-1 flex-col items-center bg-[#fafafa]">
        <div className="h-[22px] w-full bg-white" />
        <div className="mt-[2px] h-[18px] w-[8px] rounded-full bg-[#c1c1c1]" />
      </div>
    </div>
    <div className="flex h-[15px] items-center border-t border-[#dcdcdc] bg-[#fafafa] pl-px">
      <div className="h-[8px] w-[514px] rounded-full bg-[#c1c1c1]" />
    </div>
  </div>
);

const GridIcon = ({ kind, c }: { kind: "node" | "edge" | "net"; c: string }) => (
  <Art x={0} y={0} w={14} h={14}>
    <path d="M1 1.500h11v2H1z" fill={c} />
    <path d="M1 1.500h11v4M1 1.500v9.500h5M1 4.500h11M1 7.700h6M4.500 4v7M8.300 4v4" stroke={c} strokeWidth={1.200} />
    {kind === "node" && <circle cx={9.800} cy={9.800} r={3.500} fill={c} />}
    {kind === "edge" && <path d="M6.500 12.500l6-6M5.800 12.800h2M12 6v2" stroke={c} strokeWidth={1.500} />}
    {kind === "net" && <FaShareAlt x={6.500} y={6} size={7.500} color={c} />}
  </Art>
);

const TableTabs = () => (
  <div className="flex h-[29px] shrink-0 justify-end border-b border-[#cfcfcf] bg-[#ededed] text-[12.900px] tracking-[0.250px] text-[#404040]">
    <div className="flex w-[111px] items-center gap-[5px] bg-[#cbcbcb] pt-px pl-[11px] text-[#222]"><GridIcon kind="node" c="#000" /><span>Node Table</span></div>
    <div className="flex w-[108px] items-center gap-[5px] pt-px pl-[11px]"><GridIcon kind="edge" c="#444" /><span>Edge Table</span></div>
    <div className="flex w-[131px] items-center gap-[5px] pt-px pl-[11px]"><GridIcon kind="net" c="#444" /><span className="whitespace-nowrap">Network Table</span></div>
  </div>
);

const StatusBar = () => (
  <div className="flex h-[34px] shrink-0 items-center bg-[#ededed] pr-[10px] pl-[10px]">
    <div className="flex h-[24px] w-[40px] items-center justify-center border border-[#b5b5b5] bg-[#f8f8f8]"><FaCloud size={15} color="#000" /></div>
    <div className="ml-[14px] flex h-[24px] w-[40px] items-center justify-center border border-[#b5b5b5] bg-[#f8f8f8]"><FaMinusCircle size={12.500} color="#c32a0f" /></div>
    <div className="ml-auto flex h-[24px] w-[28px] items-center justify-center border border-[#b5b5b5] bg-[#f8f8f8]">
      <Art x={0} y={0} w={14} h={14}>
        <rect x={3.300} y={0.500} width={8} height={13} fill="#0b8a34" />
        <path d="M2.300 1.500v12M12.300 1.500v12" stroke="#0b8a34" strokeWidth={2} strokeDasharray="1 1" />
      </Art>
    </div>
  </div>
);

export default function App() {
  return (
    <div className="relative h-[957px] w-[1302px] overflow-hidden bg-[#12223a] font-['Noto_Sans',sans-serif] text-[11.500px] text-black">
      <div className="flex h-[956px] flex-col overflow-hidden rounded-[5px]">
        <TitleBar />
        <MainToolbar />
        <div className="flex h-[830px] shrink-0 border-b border-[#cfcfcf]">
          <SideTabs />
          <NetworkPanel />
          <div className="w-[5px] shrink-0 bg-[#d3d3d3]" />
          <div className="flex w-[963px] flex-col">
            <NetworkView />
            <ViewToolbar />
            <div className="h-[5px] shrink-0 bg-[#d3d3d3]" />
            <PanelHeader title="Node Table" />
            <TableToolbar />
            <DataTable />
          </div>
        </div>
        <TableTabs />
        <StatusBar />
      </div>
      <div className="absolute top-[588px] left-[922px] font-['DejaVu_Sans_Condensed','DejaVu_Sans'] text-[26.800px] leading-[31px] font-bold whitespace-nowrap text-[#fb0007] [font-stretch:condensed]">
        Always show<br />graphics details
      </div>
      <div className="absolute top-[658px] left-[913px] h-[74px] w-[72px] border-[3px] border-[#fb0007]" />
    </div>
  );
}
